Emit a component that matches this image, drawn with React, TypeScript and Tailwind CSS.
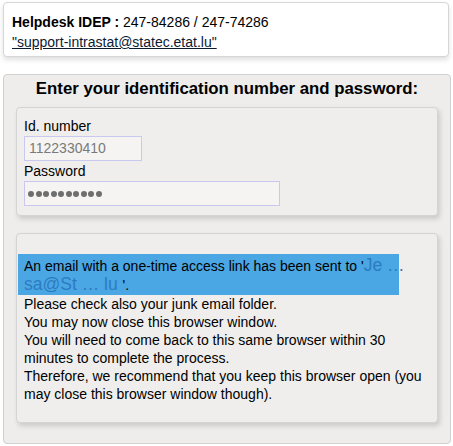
const App = () => {
    return (
        <div className="min-h-[446px] w-[453px] bg-white font-['Liberation_Sans',Arial,sans-serif] text-[14px] text-black pt-[2px]">
            {/* helpdesk box */}
            <div className="mx-[3px] w-[446px] h-[55px] rounded-[4px] border border-[#d6d6d6] bg-white shadow-[0_3px_5px_rgba(0,0,0,0.12)] px-[8px] pt-[9px] leading-[20px]">
                <div>
                    <span className="font-bold">Helpdesk IDEP :</span> 247-84286 / 247-74286
                </div>
                <a href="#" className="underline text-[#0c1a33]">"support-intrastat@statec.etat.lu"</a>
            </div>

            {/* login panel */}
            <div className="mx-[3px] mt-[17px] w-[448px] h-[370px] rounded-[4px] border border-[#d0d0d0] bg-[#eeedeb] px-[12px]">
                <h1 className="text-center font-bold text-[16.8px] leading-[20px] pt-[4px] pb-[8px]">
                    Enter your identification number and password:
                </h1>

                <div className="w-[422px] rounded-[4px] border border-[#d4d4d4] bg-[#efeeec] shadow-[2px_3px_5px_rgba(0,0,0,0.15)] px-[7px] pt-[9px] pb-[9px]">
                    <div className="leading-[18px]">Id. number</div>
                    <div className="mt-[1px] w-[118px] h-[25px] border border-[#c9c8ef] bg-[#f5f4f3] px-[4px] leading-[23px] text-[#7a7a7a]">
                        1122330410
                    </div>
                    <div className="mt-[1px] leading-[18px]">Password</div>
                    <div className="mt-[1px] w-[256px] h-[25px] border border-[#c9c8ef] bg-[#f5f4f3] px-[3px] flex items-center gap-[1.5px]">
                        {Array.from({ length: 10 }).map((_, i) => (
                            <span key={i} className="w-[6px] h-[6px] rounded-full bg-[#6e6e6e]" />
                        ))}
                    </div>
                </div>

                <div className="mt-[17px] w-[422px] rounded-[4px] border border-[#d4d4d4] bg-[#efeeec] shadow-[2px_3px_5px_rgba(0,0,0,0.15)] pl-[1px] pr-[8px] pt-[20px] pb-[19px] leading-[18px]">
                    <div className="w-[381px] bg-[#4ba6e4] pl-[6px] pt-[2px] pb-[1px] whitespace-nowrap">
                        An email with a one-time access link has been sent to '<span className="text-[#2c7cc1] text-[17.5px] leading-[18px]">Je …</span>
                        <br />
                        <span className="text-[#2c7cc1] text-[17.5px] leading-[18px]">sa@St … lu </span>'.
                    </div>
                    <div className="pl-[6px]">
                        <div>Please check also your junk email folder.</div>
                        <div>You may now close this browser window.</div>
                        <div>You will need to come back to this same browser within 30 minutes to complete the process.</div>
                        <div>Therefore, we recommend that you keep this browser open (you may close this browser window though).</div>
                    </div>
                </div>
            </div>
        </div>
    );
};

export default App;
